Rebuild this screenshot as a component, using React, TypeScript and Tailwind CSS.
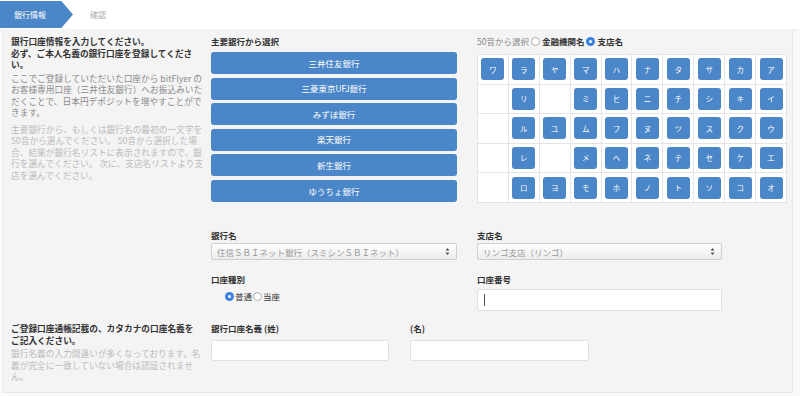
const banks = ["三井住友銀行", "三菱東京UFJ銀行", "みずほ銀行", "楽天銀行", "新生銀行", "ゆうちょ銀行"];

const kana: (string | null)[][] = [
  ["ワ", "ラ", "ヤ", "マ", "ハ", "ナ", "タ", "サ", "カ", "ア"],
  [null, "リ", null, "ミ", "ヒ", "ニ", "チ", "シ", "キ", "イ"],
  [null, "ル", "ユ", "ム", "フ", "ヌ", "ツ", "ス", "ク", "ウ"],
  [null, "レ", null, "メ", "ヘ", "ネ", "テ", "セ", "ケ", "エ"],
  [null, "ロ", "ヨ", "モ", "ホ", "ノ", "ト", "ソ", "コ", "オ"],
];

const Radio = ({ checked }: { checked?: boolean }) =>
  checked ? (
    <span className="inline-flex h-[9px] w-[9px] items-center justify-center rounded-full bg-[#3b82e0]">
      <span className="h-[3px] w-[3px] rounded-full bg-white" />
    </span>
  ) : (
    <span className="inline-block h-[9px] w-[9px] rounded-full border border-[#aaa] bg-white" />
  );

const Label = ({ children }: { children: React.ReactNode }) => (
  <div className="text-[8.5px] font-bold leading-[11.5px] text-[#333]">{children}</div>
);

const Select = ({ value, width }: { value: string; width: string }) => (
  <div
    className={`${width} flex h-[17px] items-center justify-between rounded-[2px] border border-[#cfcfcf] bg-gradient-to-b from-white to-[#ececec] pl-[5px] pr-[6px] text-[8.5px] text-[#9a9a9a]`}
  >
    <span>{value}</span>
    <svg width="5" height="9" viewBox="0 0 5 9">
      <path d="M0.5 3.5 L2.5 1 L4.5 3.5Z M0.5 5.5 L2.5 8 L4.5 5.5Z" fill="#555" />
    </svg>
  </div>
);

export default function App() {
  return (
    <div className="h-[396px] w-[800px] overflow-hidden bg-[#fafafa] font-['Noto_Sans_CJK_JP','Noto_Sans',sans-serif]">
      {/* breadcrumb */}
      <div className="flex h-[29px] items-center bg-white shadow-[0_1px_2px_rgba(0,0,0,0.08)]">
        <div className="flex h-[27px] w-[73px] items-center bg-[#4a86c8] pl-[14px] text-[8px] text-white [clip-path:polygon(0_0,84%_0,100%_50%,84%_100%,0_100%)]">
          銀行情報
        </div>
        <div className="ml-[17px] text-[8px] text-[#aaa]">確認</div>
      </div>

      <div className="ml-[2px] h-[364px] w-[791px] border-x border-b border-[#e8e8e8] bg-[#f4f4f4] pl-[8px] pt-[7px]">
        {/* top row */}
        <div className="flex">
          <div className="w-[200px] whitespace-nowrap text-[8.7px] leading-[11.5px]">
            <div className="font-bold text-[#333]">
              銀行口座情報を入力してください。
              <br />
              必ず、ご本人名義の銀行口座を登録してくださ
              <br />
              い。
            </div>
            <div className="mt-[2px] text-[#8a8a8a]">
              ここでご登録していただいた口座から bitFlyer の
              <br />
              お客様専用口座（三井住友銀行）へお振込みいた
              <br />
              だくことで、日本円デポジットを増やすことがで
              <br />
              きます。
            </div>
            <div className="mt-[5px] text-[#bbb]">
              主要銀行から、もしくは銀行名の最初の一文字を
              <br />
              50音から選んでください。 50音から選択した場
              <br />
              合、結果が銀行名リストに表示されますので、銀
              <br />
              行を選んでください。 次に、支店名リストより支
              <br />
              店を選んでください。
            </div>
          </div>

          <div className="w-[246px]">
            <Label>主要銀行から選択</Label>
            <div className="mt-[4.5px] flex flex-col gap-[3.6px]">
              {banks.map((b) => (
                <div
                  key={b}
                  className="flex h-[22px] items-center justify-center rounded-[3px] bg-[#4a86c8] text-[8.5px] text-white"
                >
                  {b}
                </div>
              ))}
            </div>
          </div>

          <div className="ml-[20px] w-[310px]">
            <div className="flex items-center gap-[2px] text-[8.5px] leading-[11.5px]">
              <span className="text-[#888]">50音から選択</span>
              <Radio />
              <span className="font-bold text-[#333]">金融機関名</span>
              <Radio checked />
              <span className="font-bold text-[#333]">支店名</span>
            </div>
            <div className="mt-[6.5px] grid grid-cols-10 border-l border-t border-[#e4e4e4] bg-white">
              {kana.flat().map((k, i) => (
                <div
                  key={i}
                  className="flex h-[29.6px] items-center justify-center border-b border-r border-[#e4e4e4]"
                >
                  {k && (
                    <div className="flex h-[22px] w-[23px] items-center justify-center rounded-[3px] bg-[#4a86c8] text-[7.5px] text-white">
                      {k}
                    </div>
                  )}
                </div>
              ))}
            </div>
          </div>
        </div>

        {/* bank / branch row */}
        <div className="mt-[27px] flex">
          <div className="w-[200px]" />
          <div className="w-[246px]">
            <Label>銀行名</Label>
            <div className="mt-[2px]">
              <Select value="住信ＳＢＩネット銀行（スミシンＳＢＩネット）" width="w-[246px]" />
            </div>
            <div className="mt-[14px]">
              <Label>口座種別</Label>
            </div>
            <div className="mt-[4px] flex items-center gap-[1px] pl-[14px] text-[8.5px] text-[#333]">
              <Radio checked />
              <span>普通</span>
              <Radio />
              <span>当座</span>
            </div>
          </div>
          <div className="ml-[20px] w-[245px]">
            <Label>支店名</Label>
            <div className="mt-[2px]">
              <Select value="リンゴ支店（リンゴ）" width="w-[245px]" />
            </div>
            <div className="mt-[14px]">
              <Label>口座番号</Label>
            </div>
            <div className="mt-[3.5px] flex h-[22px] items-center rounded-[2px] border border-[#e2e2e2] bg-white pl-[6px]">
              <span className="h-[12px] w-px bg-[#555]" />
            </div>
          </div>
        </div>

        {/* account name row */}
        <div className="mt-[12px] flex">
          <div className="w-[200px] whitespace-nowrap text-[8.7px] leading-[11.5px]">
            <div className="font-bold text-[#333]">
              ご登録口座通帳記載の、カタカナの口座名義を
              <br />
              ご記入ください。
            </div>
            <div className="mt-[2px] text-[#bbb]">
              銀行名義の入力間違いが多くなっております。名
              <br />
              義が完全に一致していない場合は認証されませ
              <br />
              ん。
            </div>
          </div>
          <div className="w-[178px]">
            <Label>銀行口座名義 (姓)</Label>
            <div className="mt-[5px] h-[21px] rounded-[2px] border border-[#e2e2e2] bg-white" />
          </div>
          <div className="ml-[21px] w-[179px]">
            <Label>(名)</Label>
            <div className="mt-[5px] h-[21px] rounded-[2px] border border-[#e2e2e2] bg-white" />
          </div>
        </div>
      </div>
    </div>
  );
}
